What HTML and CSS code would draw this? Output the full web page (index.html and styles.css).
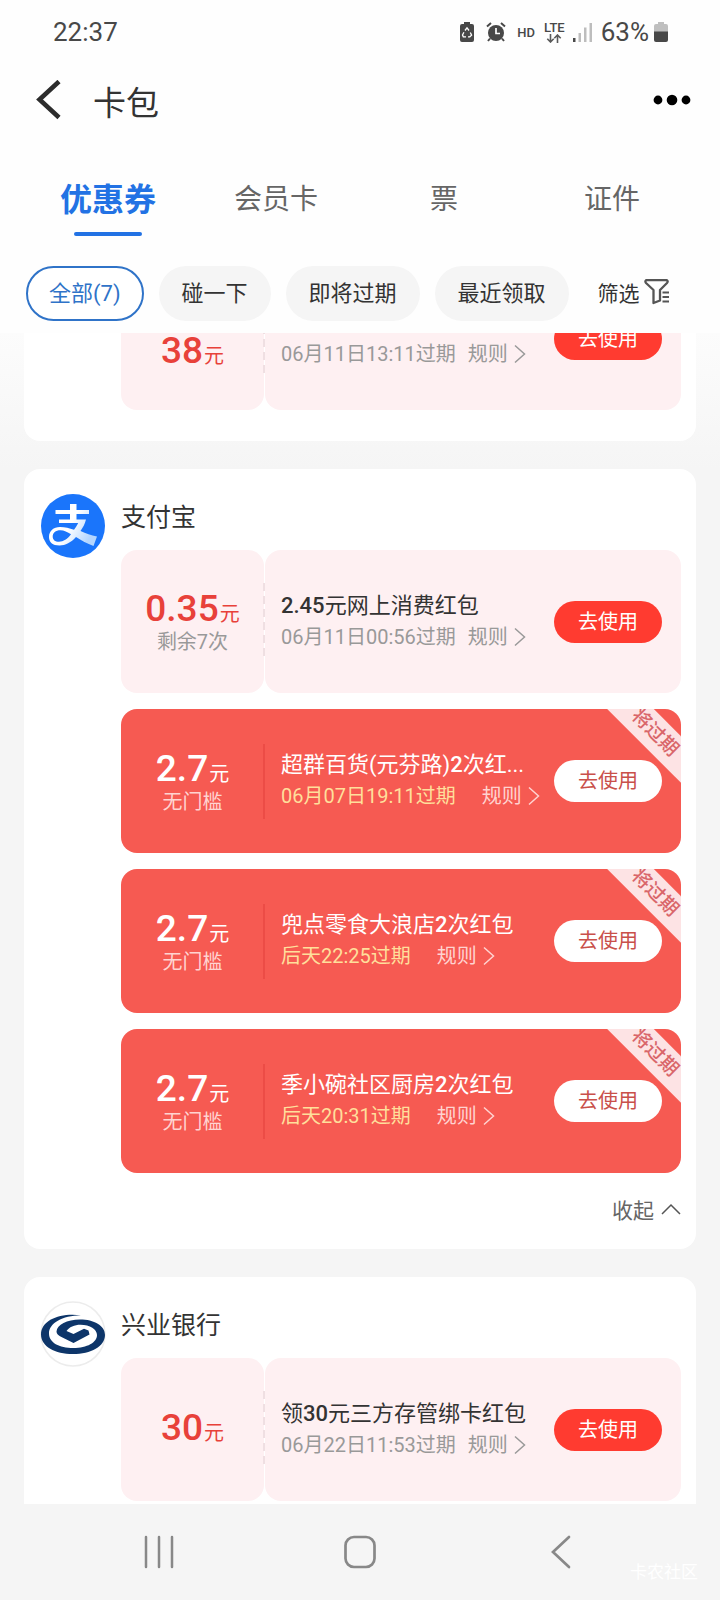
FILE: index.html
```html
<!DOCTYPE html>
<html lang="zh-CN">
<head>
<meta charset="utf-8">
<meta name="viewport" content="width=device-width, initial-scale=1">
<title>卡包</title>
<link rel="stylesheet" href="styles.css">
</head>
<body>
<svg width="0" height="0" class="sprite" aria-hidden="true">
  <symbol id="chevron" viewBox="0 0 12 20"><path d="M1 1.500L10.500 10L1 18.500" fill="none" stroke="currentColor" stroke-width="1.500"/></symbol>
</svg>

<header class="top">
  <div class="status">
    <time class="status-text">22:37</time>
    <div class="status-icons">
      <svg width="14" height="20" viewBox="0 0 14 20"><path d="M4 0h6v2h2a2 2 0 0 1 2 2v14a2 2 0 0 1-2 2H2a2 2 0 0 1-2-2V4a2 2 0 0 1 2-2h2z" fill="#484848"/><path d="M5 8.500L7 5.800L9 8.500M10.300 10.500L11.600 13.200L9.800 14.800H8M6 14.800H3.300L2.500 13L3.900 10.300" fill="none" stroke="#fff" stroke-width="1.300"/></svg>
      <svg class="alarm" width="20" height="20" viewBox="0 0 20 20"><circle cx="10" cy="11" r="8" fill="#484848"/><path d="M1 4.500L5 1M19 4.500L15 1M4 16.500L2 19M16 16.500L18 19" stroke="#484848" stroke-width="2"/><path d="M10 6v5.500h4" fill="none" stroke="#fff" stroke-width="1.700"/></svg>
      <span class="hd">HD</span>
      <span class="lte"><span>LTE</span><svg width="16" height="9" viewBox="0 0 16 9"><path d="M4.500 0v8M1.300 4.800L4.500 8l3.200-3.200M11.500 9V1M8.300 4.200L11.500 1l3.200 3.200" fill="none" stroke="#5a5a5a" stroke-width="1.600"/></svg></span>
      <svg width="19" height="20" viewBox="0 0 19 20"><path d="M0 16h2.500v4H0z" fill="#484848"/><path d="M5.500 11H8v9H5.500zM11 5.500h2.500V20H11zM16.500 1H19v19h-2.500z" fill="#bdbdbd"/></svg>
      <span class="status-text percent">63%</span>
      <svg width="14" height="20" viewBox="0 0 14 20"><path d="M4 0h6v2h2a2 2 0 0 1 2 2v6H0V4a2 2 0 0 1 2-2h2z" fill="#bfbfbf"/><path d="M0 9.500h14V18a2 2 0 0 1-2 2H2a2 2 0 0 1-2-2z" fill="#484848"/></svg>
    </div>
  </div>

  <div class="titlebar">
    <button class="plain" aria-label="返回"><svg width="26" height="40" viewBox="0 0 26 40"><path d="M24 1.500L4.500 19.500L24 37.500" fill="none" stroke="#2c2c2c" stroke-width="4.600"/></svg></button>
    <h1>卡包</h1>
    <button class="plain more" aria-label="更多"><svg width="38" height="12" viewBox="0 0 38 12"><circle cx="5" cy="6" r="4.400"/><circle cx="19" cy="6" r="5.300"/><circle cx="33" cy="6" r="4.400"/></svg></button>
  </div>

  <nav class="tabs">
    <button class="tab active">优惠券</button>
    <button class="tab">会员卡</button>
    <button class="tab">票</button>
    <button class="tab">证件</button>
  </nav>

  <div class="chips">
    <button class="chip selected">全部(7)</button>
    <button class="chip">碰一下</button>
    <button class="chip">即将过期</button>
    <button class="chip">最近领取</button>
    <button class="filter">筛选<svg width="26" height="27" viewBox="0 0 26 27"><path d="M2 2.200H23Q24.300 3.500 23 5L16 12V22.500L9.500 25V12L2 5Q.8 3.500 2 2.200Z" fill="none" stroke="#555" stroke-width="2.300" stroke-linejoin="round"/><path d="M18.500 14.500H25M18.500 19H25M18.500 23.500H25" stroke="#555" stroke-width="2"/></svg></button>
  </div>
</header>

<main class="list">
  <section class="card clipped">
    <div class="coupons">
      <article class="coupon">
        <div class="value low"><p class="amount">38<small>元</small></p></div>
        <div class="detail">
          <div class="info"><h3></h3><p class="meta"><span>06月11日13:11过期</span><a href="#">规则<svg width="12" height="20"><use href="#chevron"/></svg></a></p></div>
          <button class="use">去使用</button>
        </div>
      </article>
    </div>
  </section>

  <section class="card">
    <svg class="logo" width="64" height="64" viewBox="0 0 64 64">
      <defs><linearGradient id="fade" x1="0" y1="0" x2="1" y2=".5"><stop offset=".55" stop-color="#fff"/><stop offset="1" stop-color="#b4d6ff"/></linearGradient></defs>
      <circle cx="32" cy="32" r="32" fill="#1a75fb"/>
      <path d="M29 10h6.500v6H48v4H35.500v5.500H45C43.800 30 42 33.500 39.500 37C45 39.500 50 41.500 56 42.500L52.500 52C46 49.500 40.500 46.500 35 43C30 48.500 24.500 51.500 18.500 51.500C11.500 51.500 8 48 8 43C8 37 12.500 33 19 33C24 33 28.500 34.200 33 35.700C34.800 33.300 36.300 31 37.200 29H18v-3.500h11V20H14.500v-4H29zM19.500 36.300C14.500 36.300 11.700 39 11.700 42.500C11.700 45.800 14 47.800 18 47.800C22.500 47.800 26.500 45 30 40.300C26.500 38 23 36.300 19.500 36.300z" fill="url(#fade)" fill-rule="evenodd"/>
    </svg>
    <h2>支付宝</h2>
    <div class="coupons">
      <article class="coupon">
        <div class="value"><p class="amount">0.35<small>元</small></p><p class="note">剩余7次</p></div>
        <div class="detail">
          <div class="info"><h3><b>2.45</b>元网上消费红包</h3><p class="meta"><span>06月11日00:56过期</span><a href="#">规则<svg width="12" height="20"><use href="#chevron"/></svg></a></p></div>
          <button class="use">去使用</button>
        </div>
      </article>
      <article class="coupon urgent">
        <div class="value"><p class="amount">2.7<small>元</small></p><p class="note">无门槛</p></div>
        <div class="detail">
          <div class="info"><h3>超群百货(元芬路)<b>2</b>次红...</h3><p class="meta"><span>06月07日19:11过期</span><a href="#">规则<svg width="12" height="20"><use href="#chevron"/></svg></a></p></div>
          <button class="use">去使用</button>
        </div>
        <span class="ribbon">将过期</span>
      </article>
      <article class="coupon urgent">
        <div class="value"><p class="amount">2.7<small>元</small></p><p class="note">无门槛</p></div>
        <div class="detail">
          <div class="info"><h3>兜点零食大浪店<b>2</b>次红包</h3><p class="meta"><span>后天22:25过期</span><a href="#">规则<svg width="12" height="20"><use href="#chevron"/></svg></a></p></div>
          <button class="use">去使用</button>
        </div>
        <span class="ribbon">将过期</span>
      </article>
      <article class="coupon urgent">
        <div class="value"><p class="amount">2.7<small>元</small></p><p class="note">无门槛</p></div>
        <div class="detail">
          <div class="info"><h3>季小碗社区厨房<b>2</b>次红包</h3><p class="meta"><span>后天20:31过期</span><a href="#">规则<svg width="12" height="20"><use href="#chevron"/></svg></a></p></div>
          <button class="use">去使用</button>
        </div>
        <span class="ribbon">将过期</span>
      </article>
    </div>
    <button class="collapse">收起<svg width="20" height="12" viewBox="0 0 20 12"><path d="M1 11L10 2L19 11" fill="none" stroke="#555" stroke-width="1.500"/></svg></button>
  </section>

  <section class="card open">
    <svg class="logo" width="64" height="64" viewBox="0 0 64 64">
      <circle cx="32" cy="32" r="32" fill="#fff" stroke="#ececec" stroke-width="1.500"/>
      <path d="M40 13.300C20 10.500 0 17.500 0 32.500C0 44.500 14 52 32 52C50 52 64 44.500 64 33C64 23.500 53 17.500 39 17.500C26 17.500 16 22.500 15.500 29.500C15.500 31.500 17 33 19 34.300L32.500 41L48.500 32.500L47.500 28.500L43 26.800L32.500 32L25.500 29C28 25 33.500 22.700 39.500 22.700C49 22.700 56 27 56 33C56 40.500 46 46 32.500 46C18 46 8 40.500 8 31.500C8 21.500 21 13.500 40 13.300Z" fill="#0d3569"/>
    </svg>
    <h2>兴业银行</h2>
    <div class="coupons">
      <article class="coupon">
        <div class="value"><p class="amount">30<small>元</small></p></div>
        <div class="detail">
          <div class="info"><h3>领<b>30</b>元三方存管绑卡红包</h3><p class="meta"><span>06月22日11:53过期</span><a href="#">规则<svg width="12" height="20"><use href="#chevron"/></svg></a></p></div>
          <button class="use">去使用</button>
        </div>
      </article>
    </div>
  </section>
</main>

<footer class="sysnav">
  <button class="plain" aria-label="最近任务"><svg width="30" height="34" viewBox="0 0 30 34"><path d="M2 2v30M15 2v30M28 2v30" stroke="#888" stroke-width="2.500" stroke-linecap="round"/></svg></button>
  <button class="plain" aria-label="主屏幕"><svg width="34" height="34" viewBox="0 0 34 34"><rect x="2.500" y="2" width="29" height="30" rx="8.500" fill="none" stroke="#888" stroke-width="2.700"/></svg></button>
  <button class="plain" aria-label="返回上一页"><svg width="22" height="34" viewBox="0 0 22 34"><path d="M19 2L3 17L19 32" fill="none" stroke="#888" stroke-width="2.700" stroke-linecap="round"/></svg></button>
  <span class="watermark">卡农社区</span>
</footer>
</body>
</html>
```
FILE: styles.css
```css
* {
  box-sizing: border-box;
}

body {
  margin: 0;
  height: 100vh;
  display: flex;
  flex-direction: column;
  background: #f5f5f5;
  color: #333;
  font-family: Roboto, "Noto Sans CJK SC", sans-serif;
}

h1, h2, h3, p {
  margin: 0;
  font-weight: 400;
}

b {
  font-weight: 500;
}

button {
  margin: 0;
  padding: 0;
  border: 0;
  background: none;
  color: inherit;
  font: inherit;
  white-space: nowrap;
}

svg {
  flex: none;
  display: block;
}

.sprite {
  position: absolute;
}

.top {
  flex: none;
  background: #fefefe;
}

.status {
  height: 64px;
  padding: 0 52px 0 53px;
  display: flex;
  align-items: center;
  justify-content: space-between;
  color: #484848;
}

.status-text {
  font-size: 26px;
}

.status-icons {
  display: flex;
  align-items: center;
}

.alarm {
  margin: 0 11px 0 12px;
}

.hd {
  margin-right: 9px;
  font-size: 13px;
  font-weight: 500;
}

.lte {
  margin-right: 8px;
  display: flex;
  flex-direction: column;
  align-items: center;
  font-size: 13px;
  font-weight: 500;
  line-height: 13px;
}

.percent {
  margin: 0 5px 0 9px;
}

.titlebar {
  height: 72px;
  padding: 0 29px 0 35px;
  display: flex;
  align-items: center;
}

.titlebar h1 {
  padding-top: 7px;
  margin-left: 32px;
  font-size: 33px;
  line-height: 48px;
}

.more {
  margin-left: auto;
}

.tabs {
  height: 116px;
  padding: 20px 24px 0;
  display: grid;
  grid-template-columns: repeat(4, 1fr);
  align-items: start;
}

.tab {
  height: 80px;
  display: flex;
  flex-direction: column;
  align-items: center;
  line-height: 88px;
  font-size: 28px;
  color: #666;
}

.tab.active {
  font-size: 32px;
  font-weight: 700;
  color: #2272e4;
}

.tab.active::after {
  content: "";
  flex: none;
  width: 68px;
  height: 4px;
  margin-top: -12px;
  border-radius: 2px;
  background: #2272e4;
}

.chips {
  height: 81px;
  padding: 14px 24px 0 26px;
  display: flex;
  gap: 15px;
  align-items: flex-start;
}

.chip {
  height: 55px;
  padding: 0 21px 5px;
  border: 2px solid transparent;
  border-radius: 28px;
  background: #f5f5f5 border-box;
  font-size: 22px;
}

.chip.selected {
  border-color: #2f73c8;
  background: #fff;
  color: #2f73c8;
}

.filter {
  height: 55px;
  padding-bottom: 4px;
  margin-left: 14px;
  display: flex;
  align-items: center;
  gap: 4px;
  font-size: 21px;
}

.list {
  flex: 1;
  min-height: 0;
  padding: 0 24px;
  overflow: hidden;
  background: linear-gradient(#fcfcfc, #f5f5f5 136px);
}

.card {
  margin-bottom: 28px;
  padding: 25px 15px 0 17px;
  display: grid;
  grid-template-columns: 64px 1fr;
  column-gap: 16px;
  align-items: start;
  border-radius: 16px;
  background: #fff;
}

.card.clipped {
  margin-top: -66px;
  padding-top: 0;
}

.card.clipped,
.card.open {
  padding-bottom: 31px;
}

.logo {
  grid-row: span 2;
  overflow: visible;
}

.card h2 {
  height: 56px;
  font-size: 25px;
  line-height: 48px;
}

.coupons {
  grid-column: 2;
  display: grid;
  gap: 16px;
}

.coupon {
  position: relative;
  min-height: 143px;
  display: grid;
  grid-template-columns: 143px 1fr;
  column-gap: 1px;
  color: #999;
}

.value,
.detail {
  border-radius: 16px;
  background: #fef0f2;
}

.value {
  padding-bottom: 2px;
  display: flex;
  flex-direction: column;
  align-items: center;
  justify-content: center;
}

.value.low {
  padding-top: 28px;
}

.amount {
  padding-top: 4px;
  font-size: 37px;
  font-weight: 500;
  line-height: 34px;
  color: #e8413a;
}

.amount small {
  margin-left: 1px;
  font-size: 20px;
  font-weight: 400;
}

.note {
  font-size: 20px;
  line-height: 22px;
}

.detail {
  position: relative;
  padding: 0 19px 0 16px;
  display: flex;
  align-items: center;
  justify-content: space-between;
}

.detail::before {
  content: "";
  position: absolute;
  left: -2px;
  top: 33px;
  width: 2px;
  height: 78px;
  background: repeating-linear-gradient(#efdfe2 0 8px, transparent 8px 13px);
}

.info {
  min-width: 0;
  white-space: nowrap;
}

.info h3 {
  height: 30px;
  font-size: 22px;
  line-height: 30px;
  color: #333;
}

.meta {
  display: flex;
  gap: 12px;
  font-size: 20px;
  line-height: 32px;
}

.meta a {
  display: flex;
  align-items: center;
  gap: 6px;
  color: inherit;
  text-decoration: none;
}

.use {
  flex: none;
  width: 108px;
  height: 42px;
  padding-bottom: 3px;
  border-radius: 21px;
  background: #ff3b30;
  color: #fff;
  font-size: 20px;
}

.urgent {
  min-height: 144px;
  overflow: hidden;
  border-radius: 16px;
  background: #f65a52;
  color: #ffd3d0;
}

.urgent .value,
.urgent .detail {
  background: none;
}

.urgent .amount,
.urgent h3 {
  color: #fff;
}

.urgent .detail::before {
  top: 35px;
  height: 75px;
  background: #ec4c46;
}

.urgent .meta {
  gap: 26px;
}

.urgent .meta span {
  color: #ffdf9b;
}

.urgent .use {
  background: #fff;
  color: #c9504a;
}

.ribbon {
  position: absolute;
  top: 9px;
  right: -35px;
  width: 120px;
  height: 33px;
  padding-right: 4px;
  transform: rotate(45deg);
  background: #fde3e4;
  color: #d9666a;
  font-size: 19px;
  font-weight: 500;
  line-height: 32px;
  text-align: center;
}

.collapse {
  grid-column: 2;
  justify-self: end;
  height: 76px;
  padding-bottom: 4px;
  display: flex;
  align-items: center;
  gap: 7px;
  color: #666;
  font-size: 21px;
}

.sysnav {
  position: relative;
  flex: none;
  height: 96px;
  padding: 0 58px;
  display: grid;
  grid-template-columns: repeat(3, 1fr);
  align-items: center;
  justify-items: center;
}

.watermark {
  position: absolute;
  right: 22px;
  bottom: 16px;
  color: #fff;
  font-size: 17px;
  line-height: 24px;
}
```
